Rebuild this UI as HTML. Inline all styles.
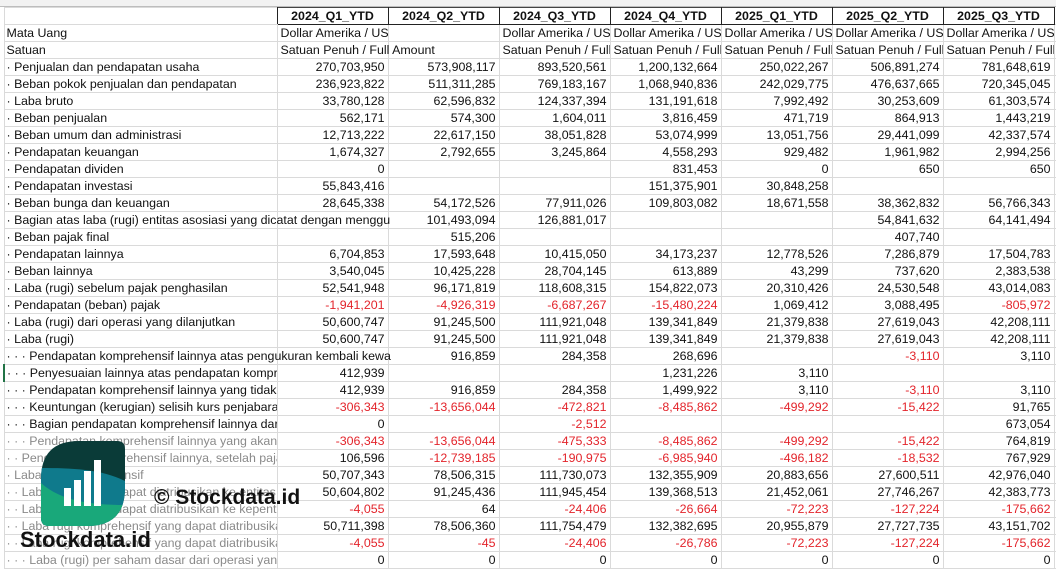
<!DOCTYPE html>
<html><head><meta charset="utf-8"><style>
html,body{margin:0;padding:0;background:#fff;width:1056px;height:572px;overflow:hidden;font-family:"Liberation Sans",Arial,sans-serif;}
.top{position:absolute;left:0;top:0;width:1056px;height:7px;background:#f2f2f2;border-bottom:1px solid #bdbdbd;box-sizing:border-box}
table{position:absolute;left:3px;top:7px;width:1060px;border-collapse:collapse;table-layout:fixed;font-size:12.4px;color:#111}
td{height:16px;line-height:16px;border:1px solid #dadada;padding:0 3px 0 3px;white-space:nowrap;overflow:hidden;text-align:right}
td.a{text-align:left;padding-left:2px}
td.l{text-align:left}
td.v{overflow:visible;position:relative;z-index:1}
tr.h td{font-weight:bold;text-align:center;border:1px solid #222;border-top-color:#444}
tr.h td.a{border:1px solid #dadada;border-right:1px solid #222}
.r{color:#e3242b}
.g td.a{color:#8a8a8a}
.wm{position:absolute;font-weight:bold;color:#111;font-family:"Liberation Sans",Arial,sans-serif;z-index:5}
</style></head><body>
<div class="top"></div>
<table>
<colgroup><col style="width:273px"><col style="width:111px"><col style="width:111px"><col style="width:111px"><col style="width:111px"><col style="width:111px"><col style="width:111px"><col style="width:111px"><col style="width:10px"></colgroup>
<tr class="h"><td class="a"></td><td>2024_Q1_YTD</td><td>2024_Q2_YTD</td><td>2024_Q3_YTD</td><td>2024_Q4_YTD</td><td>2025_Q1_YTD</td><td>2025_Q2_YTD</td><td>2025_Q3_YTD</td><td style="border:none"></td></tr>
<tr><td class="a">Mata Uang</td><td class="l">Dollar Amerika / USD</td><td></td><td class="l">Dollar Amerika / USD</td><td class="l">Dollar Amerika / USD</td><td class="l">Dollar Amerika / USD</td><td class="l">Dollar Amerika / USD</td><td class="l">Dollar Amerika / USD</td><td></td></tr>
<tr><td class="a">Satuan</td><td class="l v">Satuan Penuh / Full Amount</td><td></td><td class="l">Satuan Penuh / Full Amount</td><td class="l">Satuan Penuh / Full Amount</td><td class="l">Satuan Penuh / Full Amount</td><td class="l">Satuan Penuh / Full Amount</td><td class="l">Satuan Penuh / Full Amount</td><td></td></tr>
<tr><td class="a">· Penjualan dan pendapatan usaha</td><td>270,703,950</td><td>573,908,117</td><td>893,520,561</td><td>1,200,132,664</td><td>250,022,267</td><td>506,891,274</td><td>781,648,619</td><td></td></tr>
<tr><td class="a">· Beban pokok penjualan dan pendapatan</td><td>236,923,822</td><td>511,311,285</td><td>769,183,167</td><td>1,068,940,836</td><td>242,029,775</td><td>476,637,665</td><td>720,345,045</td><td></td></tr>
<tr><td class="a">· Laba bruto</td><td>33,780,128</td><td>62,596,832</td><td>124,337,394</td><td>131,191,618</td><td>7,992,492</td><td>30,253,609</td><td>61,303,574</td><td></td></tr>
<tr><td class="a">· Beban penjualan</td><td>562,171</td><td>574,300</td><td>1,604,011</td><td>3,816,459</td><td>471,719</td><td>864,913</td><td>1,443,219</td><td></td></tr>
<tr><td class="a">· Beban umum dan administrasi</td><td>12,713,222</td><td>22,617,150</td><td>38,051,828</td><td>53,074,999</td><td>13,051,756</td><td>29,441,099</td><td>42,337,574</td><td></td></tr>
<tr><td class="a">· Pendapatan keuangan</td><td>1,674,327</td><td>2,792,655</td><td>3,245,864</td><td>4,558,293</td><td>929,482</td><td>1,961,982</td><td>2,994,256</td><td></td></tr>
<tr><td class="a">· Pendapatan dividen</td><td>0</td><td></td><td></td><td>831,453</td><td>0</td><td>650</td><td>650</td><td></td></tr>
<tr><td class="a">· Pendapatan investasi</td><td>55,843,416</td><td></td><td></td><td>151,375,901</td><td>30,848,258</td><td></td><td></td><td></td></tr>
<tr><td class="a">· Beban bunga dan keuangan</td><td>28,645,338</td><td>54,172,526</td><td>77,911,026</td><td>109,803,082</td><td>18,671,558</td><td>38,362,832</td><td>56,766,343</td><td></td></tr>
<tr><td class="a v">· Bagian atas laba (rugi) entitas asosiasi yang dicatat dengan menggu</td><td></td><td>101,493,094</td><td>126,881,017</td><td></td><td></td><td>54,841,632</td><td>64,141,494</td><td></td></tr>
<tr><td class="a">· Beban pajak final</td><td></td><td>515,206</td><td></td><td></td><td></td><td>407,740</td><td></td><td></td></tr>
<tr><td class="a">· Pendapatan lainnya</td><td>6,704,853</td><td>17,593,648</td><td>10,415,050</td><td>34,173,237</td><td>12,778,526</td><td>7,286,879</td><td>17,504,783</td><td></td></tr>
<tr><td class="a">· Beban lainnya</td><td>3,540,045</td><td>10,425,228</td><td>28,704,145</td><td>613,889</td><td>43,299</td><td>737,620</td><td>2,383,538</td><td></td></tr>
<tr><td class="a">· Laba (rugi) sebelum pajak penghasilan</td><td>52,541,948</td><td>96,171,819</td><td>118,608,315</td><td>154,822,073</td><td>20,310,426</td><td>24,530,548</td><td>43,014,083</td><td></td></tr>
<tr><td class="a">· Pendapatan (beban) pajak</td><td class="r">-1,941,201</td><td class="r">-4,926,319</td><td class="r">-6,687,267</td><td class="r">-15,480,224</td><td>1,069,412</td><td>3,088,495</td><td class="r">-805,972</td><td></td></tr>
<tr><td class="a">· Laba (rugi) dari operasi yang dilanjutkan</td><td>50,600,747</td><td>91,245,500</td><td>111,921,048</td><td>139,341,849</td><td>21,379,838</td><td>27,619,043</td><td>42,208,111</td><td></td></tr>
<tr><td class="a">· Laba (rugi)</td><td>50,600,747</td><td>91,245,500</td><td>111,921,048</td><td>139,341,849</td><td>21,379,838</td><td>27,619,043</td><td>42,208,111</td><td></td></tr>
<tr><td class="a v">· · · Pendapatan komprehensif lainnya atas pengukuran kembali kewa</td><td></td><td>916,859</td><td>284,358</td><td>268,696</td><td></td><td class="r">-3,110</td><td>3,110</td><td></td></tr>
<tr><td class="a" style="border-left:2px solid #217346">· · · Penyesuaian lainnya atas pendapatan komprehensif</td><td>412,939</td><td></td><td></td><td>1,231,226</td><td>3,110</td><td></td><td></td><td></td></tr>
<tr><td class="a">· · · Pendapatan komprehensif lainnya yang tidak akan</td><td>412,939</td><td>916,859</td><td>284,358</td><td>1,499,922</td><td>3,110</td><td class="r">-3,110</td><td>3,110</td><td></td></tr>
<tr><td class="a">· · · Keuntungan (kerugian) selisih kurs penjabaran</td><td class="r">-306,343</td><td class="r">-13,656,044</td><td class="r">-472,821</td><td class="r">-8,485,862</td><td class="r">-499,292</td><td class="r">-15,422</td><td>91,765</td><td></td></tr>
<tr><td class="a">· · · Bagian pendapatan komprehensif lainnya dari entitas</td><td>0</td><td></td><td class="r">-2,512</td><td></td><td></td><td></td><td>673,054</td><td></td></tr>
<tr class="g"><td class="a">· · · Pendapatan komprehensif lainnya yang akan direklas</td><td class="r">-306,343</td><td class="r">-13,656,044</td><td class="r">-475,333</td><td class="r">-8,485,862</td><td class="r">-499,292</td><td class="r">-15,422</td><td>764,819</td><td></td></tr>
<tr class="g"><td class="a">· · Pendapatan komprehensif lainnya, setelah pajak</td><td>106,596</td><td class="r">-12,739,185</td><td class="r">-190,975</td><td class="r">-6,985,940</td><td class="r">-496,182</td><td class="r">-18,532</td><td>767,929</td><td></td></tr>
<tr class="g"><td class="a">· Laba rugi komprehensif</td><td>50,707,343</td><td>78,506,315</td><td>111,730,073</td><td>132,355,909</td><td>20,883,656</td><td>27,600,511</td><td>42,976,040</td><td></td></tr>
<tr class="g"><td class="a">· · Laba (rugi) yang dapat diatribusikan ke entitas induk</td><td>50,604,802</td><td>91,245,436</td><td>111,945,454</td><td>139,368,513</td><td>21,452,061</td><td>27,746,267</td><td>42,383,773</td><td></td></tr>
<tr class="g"><td class="a">· · Laba (rugi) yang dapat diatribusikan ke kepentingan</td><td class="r">-4,055</td><td>64</td><td class="r">-24,406</td><td class="r">-26,664</td><td class="r">-72,223</td><td class="r">-127,224</td><td class="r">-175,662</td><td></td></tr>
<tr class="g"><td class="a">· · Laba rugi komprehensif yang dapat diatribusikan ke</td><td>50,711,398</td><td>78,506,360</td><td>111,754,479</td><td>132,382,695</td><td>20,955,879</td><td>27,727,735</td><td>43,151,702</td><td></td></tr>
<tr class="g"><td class="a">· · Laba rugi komprehensif yang dapat diatribusikan ke</td><td class="r">-4,055</td><td class="r">-45</td><td class="r">-24,406</td><td class="r">-26,786</td><td class="r">-72,223</td><td class="r">-127,224</td><td class="r">-175,662</td><td></td></tr>
<tr class="g"><td class="a">· · · Laba (rugi) per saham dasar dari operasi yang dilanjutkan</td><td>0</td><td>0</td><td>0</td><td>0</td><td>0</td><td>0</td><td>0</td><td></td></tr>
</table>
<svg style="position:absolute;left:41px;top:441px;z-index:4" width="84" height="85" viewBox="0 0 84 85">
<defs><clipPath id="c"><path d="M38 0 H76 Q84 0 84 8 V47 Q84 85 46 85 H8 Q0 85 0 77 V38 Q0 0 38 0 Z"/></clipPath></defs>
<g clip-path="url(#c)">
<rect width="84" height="85" fill="#0a3b38"/>
<path d="M0 27 C30 27 60 28 84 40 V85 H0 Z" fill="#0f7a8c"/>
<path d="M0 42 C20 60 50 64 84 64 V85 H0 Z" fill="#19a87a"/>
</g>
<rect x="23" y="47" width="7" height="18" fill="#fff"/>
<rect x="33" y="39" width="7" height="26" fill="#fff"/>
<rect x="43" y="30" width="7" height="35" fill="#fff"/>
<rect x="53" y="19" width="7" height="46" fill="#fff"/>
</svg>
<div class="wm" style="left:154px;top:486px;font-size:21px">© Stockdata.id</div>
<div class="wm" style="left:20px;top:527px;font-size:22px">Stockdata.id</div>
</body></html>
